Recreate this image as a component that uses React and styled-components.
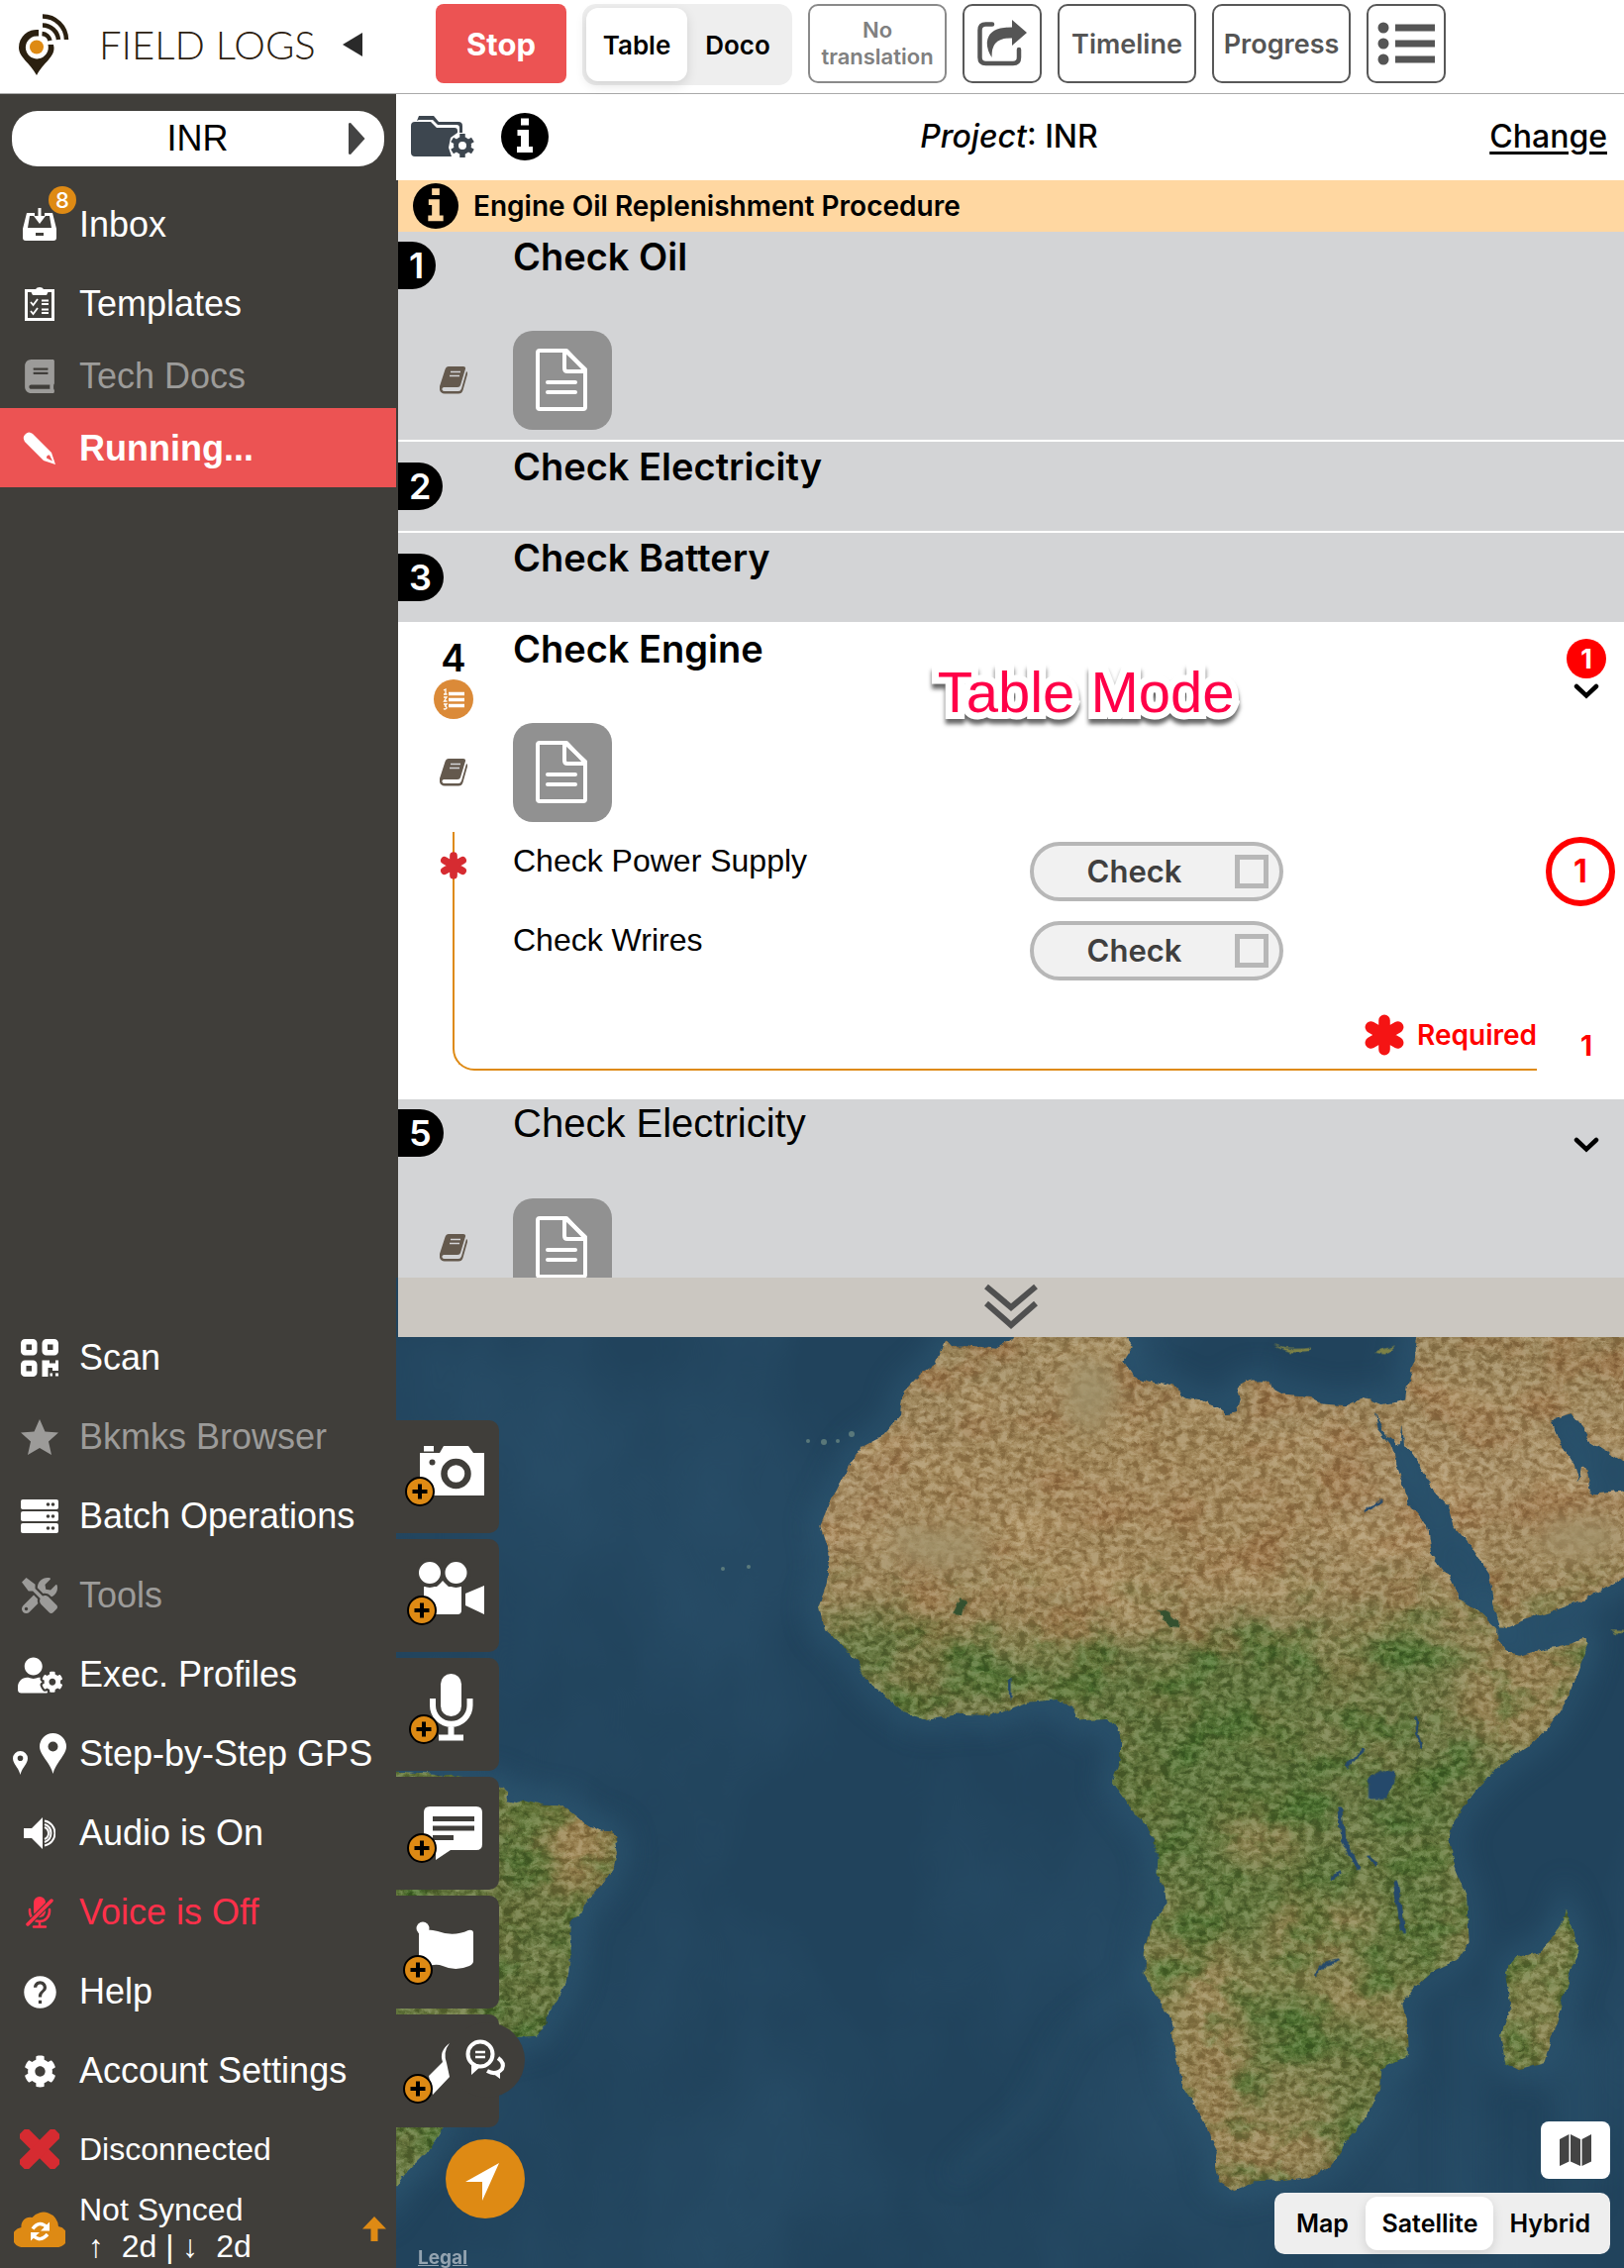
import React, { useState } from 'react'
import styled, { createGlobalStyle } from 'styled-components'
import { FaTools, FaUserCog, FaBook, FaCog } from 'react-icons/fa'
import { MdHelp } from 'react-icons/md'

const colors = {
  dark: '#403e3a',
  red: '#ec5353',
  orange: '#de8a14',
  grey: '#d3d4d6',
  alert: '#ff0000',
  ocean: '#21435c',
}

const inter = `Inter, "Noto Sans", sans-serif`
const helvetica = `"Liberation Sans", Arial, sans-serif`

const GlobalStyle = createGlobalStyle`
  * {
    box-sizing: border-box;
  }

  body {
    margin: 0;
    background: #fff;
    color: #000;
    font-family: ${inter};
  }

  button, input {
    font: inherit;
    color: inherit;
    margin: 0;
    padding: 0;
    border: 0;
    background: none;
    cursor: pointer;
  }

  h2, p, ol, ul {
    margin: 0;
    padding: 0;
    font-weight: inherit;
    list-style: none;
  }

  svg {
    display: block;
    flex: none;
  }
`

const Page = styled.div`
  display: flex;
  flex-direction: column;
  height: 100vh;
  min-height: 1900px;
`

/* ---------- header ---------- */

const Header = styled.header`
  flex: none;
  display: flex;
  height: 95px;
  border-bottom: 1px solid #a9a9a9;
`

const Brand = styled.div`
  width: 400px;
  display: flex;
  align-items: center;
  padding: 0 0 4px 16px;

  button {
    margin-left: 18px;
  }
`

const BrandName = styled.span`
  width: 228px;
  margin-left: 30px;
  font-family: Lato, sans-serif;
  font-weight: 300;
  font-size: 40px;
  line-height: 48px;
  color: #2b2010;
  white-space: nowrap;
`

const Actions = styled.div`
  display: flex;
  align-items: flex-start;
  gap: 16px;
  padding: 4px 40px;
`

const StopButton = styled.button`
  width: 132px;
  height: 80px;
  border-radius: 8px;
  background: ${colors.red};
  color: #fff;
  font-weight: 700;
  font-size: 31px;
`

const OutlineButton = styled.button`
  width: ${({ $square }) => ($square ? '80px' : '140px')};
  height: 80px;
  display: flex;
  align-items: center;
  justify-content: center;
  border: 2px solid ${({ $muted }) => ($muted ? '#8a8a8a' : '#585858')};
  border-radius: 10px;
  color: ${({ $muted }) => ($muted ? '#808080' : '#555')};
  font-weight: 600;
  font-size: ${({ $muted }) => ($muted ? '22px' : '27px')};
  line-height: 27px;
`

const Segments = styled.div`
  display: flex;
  padding: 4px;
  border-radius: ${({ $small }) => ($small ? '10px' : '14px')};
  background: #eee;
`

const Segment = styled.button`
  min-width: ${({ $tall }) => ($tall ? '102px' : '88px')};
  height: ${({ $tall }) => ($tall ? '74px' : '54px')};
  padding: ${({ $tall }) => ($tall ? '0 12px' : '0 16px')};
  border-radius: 12px;
  font-weight: 600;
  font-size: ${({ $tall }) => ($tall ? '26px' : '25px')};
  background: ${({ $active }) => ($active ? '#fff' : 'transparent')};
  box-shadow: ${({ $active }) => ($active ? '0 4px 12px rgba(0, 0, 0, 0.12)' : 'none')};
`

/* ---------- sidebar ---------- */

const Body = styled.div`
  flex: 1;
  min-height: 0;
  display: flex;
`

const Sidebar = styled.nav`
  flex: none;
  width: 400px;
  display: flex;
  flex-direction: column;
  justify-content: space-between;
  background: ${colors.dark};
  color: #fff;
  font-family: ${helvetica};
  font-size: 36px;
`

const ProjectPill = styled.button`
  width: 376px;
  height: 56px;
  display: flex;
  align-items: center;
  margin: 17px 12px 18px;
  padding-right: 19px;
  border-radius: 26px;
  background: #fff;
  color: #000;

  span {
    flex: 1;
    padding-left: 36px;
  }
`

const NavItem = styled.button`
  width: 100%;
  height: ${({ $short }) => ($short ? '66px' : '80px')};
  display: flex;
  align-items: center;
  padding-top: 2px;
  text-align: left;
  white-space: nowrap;
  background: ${({ $active }) => ($active ? colors.red : 'transparent')};
  color: ${({ $disabled, $off }) => ($disabled ? '#9c9b99' : $off ? '#ff304a' : '#fff')};
  font-weight: ${({ $active }) => ($active ? 700 : 400)};
`

const NavIcon = styled.span`
  position: relative;
  flex: none;
  width: 80px;
  display: flex;
  justify-content: center;
`

const InboxCount = styled.span`
  position: absolute;
  left: 49px;
  top: -22px;
  width: 28px;
  height: 28px;
  border-radius: 50%;
  background: ${colors.orange};
  font-family: ${inter};
  font-weight: 500;
  font-size: 22px;
  line-height: 28px;
  text-align: center;
`

const StatusRow = styled.div`
  height: 80px;
  display: flex;
  align-items: center;
  padding-right: 10px;
  font-size: 32px;
  line-height: 37px;

  p {
    flex: 1;
    white-space: pre;
  }
`

/* ---------- procedure ---------- */

const Main = styled.main`
  flex: 1;
  min-width: 0;
  display: flex;
  flex-direction: column;
`

const ProjectBar = styled.div`
  flex: none;
  height: 87px;
  display: grid;
  grid-template-columns: 1fr auto 1fr;
  align-items: center;
  padding: 0 17px 2px 15px;
  font-weight: 500;
  font-size: 32px;

  a {
    justify-self: end;
    color: #000;
    text-underline-offset: 4px;
  }
`

const BarIcons = styled.div`
  display: flex;
  align-items: center;
  gap: 27px;
`

const Banner = styled.div`
  flex: none;
  height: 52px;
  display: flex;
  align-items: center;
  gap: 15px;
  padding-left: 15px;
  border-left: 2px solid ${colors.dark};
  background: #ffd7a1;
  font-weight: 600;
  font-size: 28px;
`

const StepList = styled.ol`
  flex: 1056 1 0;
  min-height: 0;
  overflow: hidden;
  border-left: 2px solid ${colors.dark};
`

const Step = styled.li`
  position: relative;
  border-bottom: 2px solid #fff;
  background: ${({ $open }) => ($open ? '#fff' : colors.grey)};
`

const StepHead = styled.div`
  display: grid;
  grid-template-columns: 116px 1fr 88px;
  height: ${({ $plain }) => ($plain ? '90px' : '100px')};
`

const StepTitle = styled.h2`
  font-family: ${({ $light }) => ($light ? helvetica : inter)};
  font-weight: ${({ $light }) => ($light ? 400 : 600)};
  font-size: ${({ $light }) => ($light ? '40px' : '38px')};
  line-height: ${({ $light }) => ($light ? '48px' : '50px')};
`

const StepMark = styled.div`
  display: flex;
  flex-direction: column;
  align-items: ${({ $open }) => ($open ? 'center' : 'flex-start')};
  gap: 2px;
  padding: ${({ $plain, $open }) => ($open ? '14px 4px 0 0' : $plain ? '21px 0 0' : '10px 0 0')};
`

const StepBadge = styled.span`
  height: 48px;
  padding: 0 12px 0 11px;
  border-radius: 0 24px 24px 0;
  background: #000;
  color: #fff;
  font-weight: 600;
  font-size: 36px;
  line-height: 48px;
`

const StepNumber = styled.span`
  font-weight: 600;
  font-size: 38px;
  line-height: 40px;
`

const StepSide = styled.div`
  display: flex;
  flex-direction: column;
  align-items: center;
  gap: 5px;
  padding: ${({ $low }) => ($low ? '38px 0 0 12px' : '15px 0 0 12px')};
`

const AlertDot = styled.span`
  width: 40px;
  height: 40px;
  border-radius: 50%;
  background: ${colors.alert};
  color: #fff;
  font-weight: 700;
  font-size: 27px;
  line-height: 42px;
  text-align: center;
`

const Attachment = styled.div`
  display: grid;
  grid-template-columns: 116px 1fr;
  align-items: center;
  padding-bottom: 10px;
`

const Centered = styled.div`
  display: flex;
  justify-content: center;
  padding-right: 5px;
`

const DocButton = styled.button`
  width: 100px;
  height: 100px;
  border-radius: 20px;
  background: #919191;
`

const SubSteps = styled.ul`
  position: relative;
  padding-bottom: 26px;
  font-family: ${helvetica};
  font-size: 32px;

  &::before {
    content: '';
    position: absolute;
    left: 55px;
    right: 88px;
    top: 0;
    bottom: 27px;
    border: 2px solid ${colors.orange};
    border-width: 0 0 2px 2px;
    border-bottom-left-radius: 22px;
  }
`

const SubStep = styled.li`
  position: relative;
  display: grid;
  grid-template-columns: 116px 1fr 1fr 88px;
  height: 80px;
  align-items: center;
`

const SubStepMark = styled(Centered)`
  align-self: start;
  padding-top: 20px;
`

const SubStepLabel = styled.span`
  align-self: start;
  padding-top: 11px;
  line-height: 36px;
`

const CheckPill = styled.label`
  justify-self: start;
  width: 256px;
  height: 60px;
  margin-left: 5px;
  display: flex;
  align-items: center;
  border: 4px solid #b7b7b7;
  border-radius: 30px;
  background: #f1f1f1;
  color: #3f3f3f;
  font-family: ${inter};
  font-weight: 600;
  font-size: 31px;
  line-height: 48px;
  cursor: pointer;

  span {
    flex: 1;
    text-align: center;
  }

  input {
    appearance: none;
    width: 34px;
    height: 34px;
    margin-right: 11px;
    border: 5px solid #b7b7b7;
  }

  input:checked {
    background: ${colors.orange};
  }
`

const AlertRing = styled.span`
  justify-self: center;
  width: 70px;
  height: 70px;
  border: 6px solid ${colors.alert};
  border-radius: 50%;
  color: ${colors.alert};
  font-family: ${inter};
  font-weight: 700;
  font-size: 32px;
  line-height: 58px;
  text-align: center;
`

const RequiredRow = styled.div`
  display: grid;
  grid-template-columns: 1fr 88px;
  align-items: center;
  height: 82px;
  padding-top: 8px;
  color: ${colors.alert};
  font-family: ${inter};
  font-weight: 600;
  font-size: 28px;

  p {
    display: flex;
    align-items: center;
    justify-content: flex-end;
    gap: 12px;
  }

  strong {
    padding: 22px 0 0 12px;
    text-align: center;
    font-weight: 700;
  }
`

const ModeNote = styled.span`
  position: absolute;
  left: 44%;
  top: 36px;
  color: #ff0048;
  font-family: ${helvetica};
  font-size: 58px;
  line-height: 66px;
  white-space: nowrap;
  -webkit-text-stroke: 14px #fff;
  paint-order: stroke fill;
  filter: drop-shadow(0 5px 2px rgba(0, 0, 0, 0.6));
`

const CollapseBar = styled.button`
  flex: none;
  height: 60px;
  display: flex;
  align-items: center;
  justify-content: center;
  border-left: 2px solid ${colors.ocean};
  background: #cbc7c1;
`

/* ---------- map ---------- */

const MapArea = styled.section`
  position: relative;
  flex: 940 1 0;
  min-height: 0;
  overflow: hidden;
  background: ${colors.ocean};
`

const MapPicture = styled.svg`
  width: 100%;
  height: 100%;

  filter {
    color-interpolation-filters: sRGB;
  }

  .shade {
    mix-blend-mode: soft-light;
  }
`

const CaptureBar = styled.div`
  position: absolute;
  left: 0;
  bottom: 142px;
  display: flex;
  flex-direction: column;
  gap: 6px;
`

const CaptureButton = styled.button`
  position: relative;
  width: 104px;
  height: 114px;
  border-radius: 0 10px 10px 0;
  background: ${colors.dark};

  svg {
    overflow: visible;
  }
`

const LocateButton = styled.button`
  position: absolute;
  left: 50px;
  bottom: 50px;
  width: 80px;
  height: 80px;
  border-radius: 50%;
  background: ${colors.orange};
`

const LegalLink = styled.a`
  position: absolute;
  left: 22px;
  bottom: 0;
  color: #93a3b0;
  font-weight: 700;
  font-size: 19px;
  line-height: 20px;
`

const MapControls = styled.div`
  position: absolute;
  right: 14px;
  bottom: 14px;
  display: flex;
  flex-direction: column;
  align-items: flex-end;
  gap: 14px;
`

const MapButton = styled.button`
  width: 70px;
  height: 58px;
  border-radius: 8px;
  background: #fff;
`

/* ---------- icons ---------- */

const Logo = () => (
  <svg width="54" height="64" viewBox="16 12 54 64">
    <path fill="#2b2010" d="M39 29A18 18 0 0 0 19 47C19 57 30 62 37 75C44 62 55 57 54.500 47L54 44H48.500A11.500 11.500 0 1 1 39 35.500Z" />
    <circle cx="37" cy="46.500" r="7" fill={colors.orange} />
    <g fill="none" stroke="#2b2010" strokeWidth="4.500">
      <path d="M43 15.500A24 24 0 0 1 67 39" />
      <path d="M43 24.500A16 16 0 0 1 59 39" />
      <path d="M42.500 33A9 9 0 0 1 50.500 40" />
    </g>
  </svg>
)

const ShareIcon = () => (
  <svg width="52" height="50" viewBox="0 0 52 50" fill="#555">
    <path fill="none" stroke="#555" strokeWidth="4.500" strokeLinecap="round" d="M16 5.500H9.500Q3.500 5.500 3.500 11.500V39Q3.500 45 9.500 45H37Q43 45 43 39V31" />
    <path d="M36 1L51 14L36 27V19.500Q24 19 19 25Q15.500 29 15.500 39Q9 29 11.500 20Q15 8.500 36 8.500Z" />
  </svg>
)

const BulletsIcon = () => (
  <svg width="58" height="44" viewBox="0 0 58 44" fill="#555">
    {[6, 22, 38].map((y) => (
      <g key={y}>
        <circle cx="6" cy={y} r="5.500" />
        <rect x="18" y={y - 3.5} width="40" height="7" />
      </g>
    ))}
  </svg>
)

const Triangle = ({ left }) =>
  left ? (
    <svg width="20" height="24" viewBox="0 0 20 24"><path d="M20 0V24L0 12Z" fill="#2a2a2a" /></svg>
  ) : (
    <svg width="18" height="32" viewBox="0 0 18 32"><path d="M1 1Q1 0 3 0L17.500 16L3 32Q1 32 1 31Z" fill="#444" /></svg>
  )

const InboxIcon = () => (
  <svg width="36" height="34" viewBox="0 0 36 34">
    <path fill="#fff" fillRule="evenodd" d="M5 5H13V8H8L6 20H30L28 8H23V5H31L35 21V30Q35 33 32 33H4Q1 33 1 30V21ZM14 25V28H22V25Z" />
    <path fill="#fff" d="M16.500 0H19.500V8H24L18 16L12 8H16.500Z" />
  </svg>
)

const ClipboardIcon = () => (
  <svg width="30" height="34" viewBox="0 0 30 34" fill="none">
    <rect x="1.500" y="3.500" width="27" height="29" stroke="#fff" strokeWidth="3" />
    <path d="M6 4Q6 2 9 2H11Q12 0 15 0T19 2H21Q24 2 24 4L22 8H8Z" fill="#fff" />
    <path d="M6 15L8.500 18L13 12M6 24L8.500 27L13 21" stroke="#fff" strokeWidth="1.800" />
    <path d="M17 13.500H24M17 17H24M17 22.500H24M17 26H24" stroke="#fff" strokeWidth="1.800" />
  </svg>
)

const PencilIcon = () => (
  <svg width="34" height="34" viewBox="0 0 34 34">
    <path fill="#fff" fillRule="evenodd" d="M2 10Q-1 5 3 2Q6 -1 10 2L29 21L33 33L21 29ZM24 26.500L30 29.500L27 23.500Q24 23 24 26.500Z" />
  </svg>
)

const ScanIcon = () => (
  <svg width="38" height="38" viewBox="0 0 38 38">
    <g fill="none" stroke="#fff" strokeWidth="5.500">
      <rect x="2.750" y="2.750" width="11" height="11" rx="1.500" />
      <rect x="24.250" y="2.750" width="11" height="11" rx="1.500" />
      <rect x="2.750" y="24.250" width="11" height="11" rx="1.500" />
    </g>
    <path fill="#fff" d="M21.500 21.500H29V24.500H35V21.500H38V32H32V29H27.500V38H21.500ZM29.500 34.500H32V37.500H29.500ZM35 34.500H38V37.500H35Z" />
  </svg>
)

const StarIcon = () => (
  <svg width="38" height="36" viewBox="0 0 38 36">
    <path fill="currentColor" d="M19 0L24.500 12.500L38 13.500L28 22.500L31 36L19 29L7 36L10 22.500L0 13.500L13.500 12.500Z" />
  </svg>
)

const ServerIcon = () => (
  <svg width="38" height="34" viewBox="0 0 38 34">
    {[0, 12, 24].map((y) => (
      <g key={y}>
        <rect y={y} width="38" height="10" rx="2" fill="#fff" />
        <circle cx="27.500" cy={y + 5} r="1.800" fill={colors.dark} />
        <circle cx="32.500" cy={y + 5} r="1.800" fill={colors.dark} />
      </g>
    ))}
  </svg>
)

const PinsIcon = () => (
  <svg width="54" height="42" viewBox="0 0 54 42" fill="#fff" fillRule="evenodd">
    <path d="M40.500 0A13.500 13.500 0 0 1 54 13.500C54 22 43 30 40.500 41C38 30 27 22 27 13.500A13.500 13.500 0 0 1 40.500 0ZM40.500 8.500A5 5 0 1 0 40.500 18.500A5 5 0 1 0 40.500 8.500Z" />
    <path d="M7.500 18A7.500 7.500 0 0 1 15 25.500C15 31 9 35 7.500 42C6 35 0 31 0 25.500A7.500 7.500 0 0 1 7.500 18ZM7.500 22.500A2.800 2.800 0 1 0 7.500 28.100A2.800 2.800 0 1 0 7.500 22.500Z" />
  </svg>
)

const SpeakerIcon = () => (
  <svg width="32" height="32" viewBox="0 0 32 32">
    <path fill="#fff" d="M0 11H8L19 0V32L8 21H0Z" />
    <path fill="none" stroke="#fff" strokeWidth="2" d="M21 10A6.500 6.500 0 0 1 21 22M21 7A9.500 9.500 0 0 1 21 25M21 3.500A12.700 12.700 0 0 1 21 28.500" />
  </svg>
)

const MicOffIcon = () => (
  <svg width="28" height="32" viewBox="0 0 28 32" fill="none" stroke="#ff304a" strokeLinecap="round">
    <rect x="8" y="0" width="12" height="21" rx="6" fill="#ff304a" stroke="none" />
    <path strokeWidth="2.500" d="M4 13V15A10 10 0 0 0 24 15V13M14 26V30M8 30.500H20" />
    <path stroke={colors.dark} strokeWidth="5.500" d="M2 28L26 4" />
    <path strokeWidth="3.500" d="M2 28L26 4" />
  </svg>
)

const CrossIcon = () => (
  <svg width="40" height="40" viewBox="0 0 40 40">
    <g transform="rotate(45 20 20)" fill="#d62b31">
      <rect x="-5" y="13.500" width="50" height="13" rx="3" />
      <rect x="13.500" y="-5" width="13" height="50" rx="3" />
    </g>
  </svg>
)

const CloudIcon = () => (
  <svg width="52" height="38" viewBox="0 0 52 38">
    <path fill={colors.orange} d="M10 38A10 10 0 0 1 7.500 18A9 9 0 0 1 18.500 8A15 15 0 0 1 45 17A10.500 10.500 0 0 1 42 38Z" />
    <g fill="none" stroke="#fff" strokeWidth="3.500">
      <path d="M19 19.500Q26 10 34 18.500M34 25Q26 34 19 25.500" />
    </g>
    <path fill="#fff" d="M36 12.500V21.500H27ZM17 31.500V23H26Z" />
  </svg>
)

const UpArrow = () => (
  <svg width="24" height="25" viewBox="0 0 24 25">
    <path fill={colors.orange} d="M12 0L24 12.500H15.500V25H8.500V12.500H0Z" />
  </svg>
)

const FolderIcon = () => (
  <svg width="64" height="42" viewBox="0 0 64 42">
    <path fill="#3d464f" d="M6 5L8 0H23L28 6H48Q52 6 52 10V17H49V12Q49 9 46 9H27L22 4H8Z" />
    <path fill="#3d464f" d="M0 10Q0 6 4 6H20L26 12H44Q47 12 47 15V17L40 22L38 32L41 41H4Q0 41 0 37Z" />
    <g transform="translate(52 30)" stroke="#3d464f">
      <circle r="6.500" fill="none" strokeWidth="5" />
      <path strokeWidth="5.500" d="M0 -12V-8M0 8V12M-10.400 -6L-7 -4M10.400 6L7 4M-10.400 6L-7 4M10.400 -6L7 -4" />
    </g>
  </svg>
)

const InfoIcon = ({ size, hole }) => (
  <svg width={size} height={size} viewBox="0 0 48 48">
    <circle cx="24" cy="24" r="24" />
    <path fill={hole} d="M20 5.500H28V12.500H20ZM16.500 17H28V34H32V40H16V34H20V23H16.500Z" />
  </svg>
)

const BookIcon = () => (
  <svg width="28" height="28" viewBox="0 0 28 28">
    <path fill="#64594d" d="M9 0H24Q26.500 0 26 2.500L21 19Q20.500 21 18 21H4Q2 21.500 2.500 23.500Q3 25 5 25H19Q21 25 22 22.500L27 5Q28.500 6 28 8L23.500 24Q22.500 27.500 19 27.500H5Q-1 27 0 20L5.500 3Q6.500 0 9 0Z" />
    <path stroke={colors.grey} strokeWidth="1.500" d="M11 5.500H21M10 9.500H20" />
  </svg>
)

const DocIcon = () => (
  <svg width="100" height="100" viewBox="0 0 100 100" fill="none" stroke="#fff" strokeWidth="4" strokeLinejoin="round" strokeLinecap="round">
    <path d="M27 20H54L73 40V77Q73 79 71 79H27Q25 79 25 77V22Q25 20 27 20Z" />
    <path d="M52 21V38Q52 41 55 41H73M55 22L73 39" />
    <path d="M35 52H63M35 62H63" />
  </svg>
)

const ChevronIcon = () => (
  <svg width="26" height="16" viewBox="0 0 26 16">
    <path d="M3 3L13 12.500L23 3" fill="none" stroke="#000" strokeWidth="4.500" strokeLinecap="round" />
  </svg>
)

const DoubleChevron = () => (
  <svg width="56" height="50" viewBox="0 0 56 50" fill="none" stroke="#505050" strokeWidth="6">
    <path d="M3 4L28 25L53 4M3 21L28 43L53 21" />
  </svg>
)

const OrderedIcon = () => (
  <svg width="40" height="40" viewBox="0 0 40 40">
    <circle cx="20" cy="20" r="20" fill="#db8a38" />
    <path stroke="#fff" strokeWidth="3.500" d="M15 14.500H31M15 20.500H31M15 26.500H31" />
    <path fill="none" stroke="#fff" strokeWidth="1.300" d="M10 11L12 10V15M10 15H13.500M10 18H13L10.500 22H13.500M10 25H13L11.500 27Q14 28 12.500 29.500Q11 30.500 10 29.500" />
  </svg>
)

const Asterisk = ({ size, color }) => (
  <svg width={size} height={size} viewBox="-20 -20 40 40" stroke={color} strokeWidth="11" strokeLinecap="round">
    <path d="M0 -14V14M-13 -7.500L13 7.500M-13 7.500L13 -7.500" />
  </svg>
)

const Plus = ({ x, y }) => (
  <g transform={`translate(${x} ${y})`} stroke="#000">
    <circle r="14" fill={colors.orange} strokeWidth="2" />
    <path strokeWidth="4" d="M-7.500 0H7.500M0 -7.500V7.500" />
  </g>
)

const captureTools = [
  {
    label: 'Add photo',
    plus: [24, 72],
    art: (
      <>
        <path d="M24 33H44L48 26H73L78 33H89V76H24ZM28 26H38V31.500H28Z" />
        <circle cx="36.500" cy="42.500" r="3" fill={colors.dark} />
        <circle cx="60.500" cy="54" r="12" stroke={colors.dark} strokeWidth="6.500" />
      </>
    ),
  },
  {
    label: 'Add video',
    plus: [26, 72],
    art: (
      <>
        <path d="M28 48H41L47 42L53 48H66V72Q66 76 62 76H28ZM70 55L89 47V76L70 67Z" />
        <g stroke={colors.dark} strokeWidth="4">
          <circle cx="34" cy="34" r="13" />
          <circle cx="60.500" cy="34" r="13" />
        </g>
      </>
    ),
  },
  {
    label: 'Add audio',
    plus: [28, 72],
    art: (
      <>
        <rect x="45" y="16" width="21" height="43" rx="10.500" />
        <path fill="none" stroke="#fff" strokeWidth="6" d="M37 41V48A18.500 18.500 0 0 0 74.500 48V41M55.500 67V80M43 80.500H68" />
      </>
    ),
  },
  {
    label: 'Add comment',
    plus: [26, 72],
    art: (
      <>
        <path d="M34 30H81Q87 30 87 36V68Q87 74 81 74H55L40 84V74H34Q28 74 28 68V36Q28 30 34 30Z" />
        <path stroke={colors.dark} strokeWidth="5" d="M37 42.500H79M37 52H79M37 61.500H58" />
      </>
    ),
  },
  {
    label: 'Add flag',
    plus: [22, 75],
    art: (
      <>
        <circle cx="27" cy="33" r="6.500" />
        <path d="M23 36Q32 33 42 36Q58 42 73 35Q78 34 78 38V66Q78 69 74 71Q60 77 47 71Q40 68 30 72L23 74Z" />
      </>
    ),
  },
  {
    label: 'Add drawing',
    plus: [22, 75],
    art: (
      <>
        <circle cx="92" cy="46" r="38" fill={colors.dark} />
        <path d="M54 29Q43 37 47 48L33 62L37 81L54 63L51 49Q47 38 54 29Z" />
        <g fill="none" stroke="#fff" strokeWidth="4">
          <circle cx="85" cy="40" r="12.500" />
          <path d="M103 44Q110 49 107 55Q101 62 92 57" />
          <path strokeWidth="2.500" d="M80 38H90M80 43H90" />
        </g>
        <path d="M76 48V61L86 52ZM105 56V65L97 59Z" />
      </>
    ),
  },
]

/* Land outlines; the Africa sheet and the Brazil sheet each have their own scale. */
const AFRICA =
  'M318 22L330 35L370 33L410 38L440 20L470 5V-140H640V0L665 35L648 60L665 85L690 95L745 105L760 125L790 130L820 142L835 152L855 148L862 125L856 108L880 95L905 95L920 105L945 118L990 122L1015 135L1055 138L1085 125L1105 130L1120 136L1150 132L1165 128L1168 105L1182 65L1187 17V-140H1620V245L1568 235L1530 215L1505 200L1495 180L1475 155L1455 160L1435 165L1450 200L1475 240L1485 270L1490 246L1500 250L1507 268L1502 285L1515 295L1568 290L1620 290V430L1568 442L1520 465L1495 480L1450 495L1385 515L1355 528L1340 527L1330 500L1325 470L1320 435L1290 390L1255 350L1245 315L1215 285L1185 235L1163 205L1160 170L1157 200L1150 208L1130 192L1118 170L1110 150L1115 180L1140 210L1152 250L1175 315L1205 350L1213 400L1245 440L1265 480L1300 500L1335 530V552L1350 572L1375 578L1430 565L1470 557L1498 545L1500 565L1480 615L1460 660L1430 705L1395 735L1340 770L1300 810L1275 840L1255 870L1246 905L1255 950L1278 1000L1283 1080L1260 1115L1215 1135L1180 1165L1160 1190L1170 1235L1172 1280L1120 1305L1118 1340L1100 1380L1060 1430L1025 1475L990 1495L940 1500L890 1502L850 1518L820 1500L815 1475L822 1452L790 1390L755 1335L740 1270L738 1230L715 1190L685 1140V1100L700 1045L725 1015L722 985L710 965L712 930L690 880L655 840L625 800L640 760V715L620 690L565 692L550 665L525 655L470 660L400 685L340 682L280 692L240 675L180 630L160 595L130 560L95 530L85 490L100 450L105 400L88 350L110 300L140 245L165 210L205 190L235 155L240 115L270 85L300 65Z'
const MADAGASCAR =
  'M1460 1025L1475 1060L1485 1100L1470 1130L1445 1220L1420 1295L1375 1307L1350 1295L1340 1245L1360 1190L1350 1130L1370 1108L1410 1100L1440 1070L1455 1045Z'
const BRAZIL =
  'M0 25L130 32L230 50L335 75L355 90L350 115L380 120L410 112L460 128L520 130L590 185L630 205L665 208L680 225L687 270L680 310L640 370L600 410L570 465L545 480V580L535 650L515 700L470 770V795L435 830L380 835L250 880L170 1000L160 1105L110 1180L50 1240L0 1310Z'
const AFRICA_SHEET = 'translate(380 -10) scale(0.5485 0.574)'
const BRAZIL_SHEET = 'translate(-5 430) scale(0.3333)'

const greens = [
  [220, 560, 130, 60], [480, 600, 200, 50], [820, 640, 240, 90], [1140, 580, 110, 80],
  [820, 800, 210, 110], [1180, 900, 80, 150], [900, 980, 180, 100], [1170, 1100, 90, 60],
  [980, 1230, 120, 70], [1080, 1360, 50, 90], [720, 760, 80, 90],
]
const sands = [
  [1380, 640, 110, 110], [800, 1260, 70, 170], [640, 300, 400, 150], [900, 1440, 110, 50],
  [1000, 1060, 100, 50], [1060, 1180, 80, 40], [900, 900, 80, 40], [560, 520, 260, 30],
]

const Satellite = () => (
  <MapPicture viewBox="0 0 1240 940" preserveAspectRatio="xMidYMid slice" role="img" aria-label="Satellite map">
    <defs>
      <linearGradient id="land" gradientUnits="userSpaceOnUse" x1="0" y1="0" x2="0" y2="1520">
        <stop offset="0" stopColor="#9a855a" />
        <stop offset="0.200" stopColor="#a68c62" />
        <stop offset="0.300" stopColor="#9c865a" />
        <stop offset="0.390" stopColor="#7c7d4c" />
        <stop offset="0.560" stopColor="#6a7843" />
        <stop offset="0.750" stopColor="#7c804a" />
        <stop offset="1" stopColor="#8a7f50" />
      </linearGradient>
      <filter id="soft" x="-30%" y="-30%" width="160%" height="160%">
        <feGaussianBlur stdDeviation="22" />
      </filter>
      <filter id="shelf" x="-10%" y="-10%" width="120%" height="120%">
        <feGaussianBlur stdDeviation="14" />
      </filter>
      <filter id="coast" x="-5%" y="-5%" width="110%" height="110%">
        <feTurbulence type="fractalNoise" baseFrequency="0.08" numOctaves="3" seed="4" result="n" />
        <feDisplacementMap in="SourceGraphic" in2="n" scale="7" xChannelSelector="R" yChannelSelector="G" />
      </filter>
      <filter id="patches" x="0" y="0" width="100%" height="100%">
        <feTurbulence type="fractalNoise" baseFrequency="0.018 0.024" numOctaves="6" seed="11" />
        <feColorMatrix type="matrix" values="0 0 0 0 0.230  0 0 0 0 0.420  0 0 0 0 0.150  3.500 0 0 0 -1.650" />
      </filter>
      <filter id="dunes" x="0" y="0" width="100%" height="100%">
        <feTurbulence type="fractalNoise" baseFrequency="0.010 0.022" numOctaves="6" seed="21" />
        <feColorMatrix type="matrix" values="0 0 0 0 0.720  0 0 0 0 0.610  0 0 0 0 0.430  0 3.500 0 0 -1.650" />
      </filter>
      <filter id="rust" x="0" y="0" width="100%" height="100%">
        <feTurbulence type="fractalNoise" baseFrequency="0.014 0.020" numOctaves="6" seed="34" />
        <feColorMatrix type="matrix" values="0 0 0 0 0.600  0 0 0 0 0.430  0 0 0 0 0.260  0 3.500 0 0 -1.750" />
      </filter>
      <filter id="grain" x="0" y="0" width="100%" height="100%">
        <feTurbulence type="fractalNoise" baseFrequency="0.110 0.160" numOctaves="5" seed="3" />
        <feColorMatrix type="matrix" values="2.400 0 0 0 -0.700  2.400 0 0 0 -0.700  2.400 0 0 0 -0.700  0 0 0 0 1" />
      </filter>
      <filter id="swell" x="0" y="0" width="100%" height="100%">
        <feTurbulence type="fractalNoise" baseFrequency="0.005 0.003" numOctaves="4" seed="8" />
        <feColorMatrix type="matrix" values="0 0 0 0 0.190  0 0 0 0 0.350  0 0 0 0 0.460  2 0 0 0 -0.750" />
      </filter>
      <linearGradient id="greenZone" x1="0" y1="0" x2="0" y2="1">
        <stop offset="0.230" stopColor="#000" />
        <stop offset="0.340" stopColor="#fff" />
      </linearGradient>
      <linearGradient id="duneZone" x1="0" y1="0" x2="0" y2="1">
        <stop offset="0.250" stopColor="#fff" />
        <stop offset="0.420" stopColor="#444" />
      </linearGradient>
      <mask id="greenMask"><rect width="1240" height="940" fill="url(#greenZone)" /></mask>
      <mask id="duneMask"><rect width="1240" height="940" fill="url(#duneZone)" /></mask>
      <clipPath id="landClip">
        <path d={AFRICA} transform={AFRICA_SHEET} />
        <path d={MADAGASCAR} transform={AFRICA_SHEET} />
        <path d={BRAZIL} transform={BRAZIL_SHEET} />
      </clipPath>
    </defs>

    <rect width="1240" height="940" fill={colors.ocean} />
    <rect width="1240" height="940" filter="url(#swell)" opacity="0.450" />
    <g filter="url(#shelf)" fill="none" stroke="#325f7a" strokeWidth="36" opacity="0.600">
      <path d={AFRICA} transform={AFRICA_SHEET} />
      <path d={MADAGASCAR} transform={AFRICA_SHEET} />
      <path d={BRAZIL} transform={BRAZIL_SHEET} strokeWidth="70" />
      <path d="M560 850L640 780L680 700L750 650" strokeWidth="14" opacity="0.500" />
      <path d="M1080 660V900M1190 700V880" strokeWidth="40" opacity="0.400" />
    </g>

    <g filter="url(#coast)">
      <g clipPath="url(#landClip)">
        <g transform={AFRICA_SHEET}>
          <rect x="0" y="-140" width="1640" height="1700" fill="url(#land)" />
          <g filter="url(#soft)">
            <g fill="#4a6e30" opacity="0.500">
              {greens.map(([x, y, rx, ry]) => <ellipse key={`${x}-${y}`} cx={x} cy={y} rx={rx} ry={ry} />)}
            </g>
            <g fill="#a28759" opacity="0.650">
              {sands.map(([x, y, rx, ry]) => <ellipse key={`${x}-${y}`} cx={x} cy={y} rx={rx} ry={ry} />)}
            </g>
          </g>
        </g>
        <path d={BRAZIL} transform={BRAZIL_SHEET} fill="#62743c" />
        <g filter="url(#soft)" fill="#9a8151">
          <ellipse cx="185" cy="510" rx="45" ry="60" />
        </g>
        <g mask="url(#greenMask)">
          <rect width="1240" height="940" filter="url(#patches)" opacity="0.550" />
        </g>
        <g mask="url(#duneMask)">
          <rect width="1240" height="940" filter="url(#dunes)" opacity="0.500" />
          <rect width="1240" height="940" filter="url(#rust)" opacity="0.550" />
        </g>
        <rect className="shade" width="1240" height="940" filter="url(#grain)" opacity="0.450" />
        <g transform={AFRICA_SHEET}>
          <g filter="url(#soft)" fill="#a1936c" opacity="0.800">
            <ellipse cx="585" cy="120" rx="50" ry="65" />
            <ellipse cx="300" cy="385" rx="100" ry="35" />
            <ellipse cx="1480" cy="370" rx="80" ry="35" />
          </g>
        </g>
      </g>
      <g transform={AFRICA_SHEET} fill="#7c8146">
        <path d="M922 32Q955 42 992 36L985 44Q950 48 922 32ZM1110 44L1145 32L1130 48Z" />
        <path d="M1545 532L1568 533V538H1550Z" />
      </g>
      <g transform={AFRICA_SHEET} fill="#25496b" stroke="#25496b" strokeLinecap="round">
        <path d="M1100 790L1120 780L1145 785L1140 805L1130 828L1100 830Z" />
        <path fill="none" strokeWidth="9" d="M1045 850L1050 900L1065 925L1078 952M1147 978L1155 1020L1160 1062" />
        <path fill="none" strokeWidth="5" d="M1184 690L1186 715L1194 738M1058 775L1085 745M1002 1140L1020 1120L1040 1115M1092 325L1120 305M1095 932L1112 946M438 620V650M1030 970L1045 958" />
        <path stroke="none" fill="#35512f" d="M708 498L725 500L745 515L748 530L730 528ZM332 505L345 478L356 482L350 508Z" />
      </g>
    </g>
    <g fill="#7f9a8c" opacity="0.600">
      <circle cx="416" cy="105" r="2" />
      <circle cx="432" cy="106" r="3" />
      <circle cx="446" cy="105" r="2" />
      <circle cx="460" cy="98" r="3" />
      <circle cx="330" cy="234" r="2" />
      <circle cx="356" cy="232" r="2" />
    </g>
  </MapPicture>
)

/* ---------- content ---------- */

const tools = [
  { label: 'Scan', icon: <ScanIcon /> },
  { label: 'Bkmks Browser', icon: <StarIcon />, disabled: true },
  { label: 'Batch Operations', icon: <ServerIcon /> },
  { label: 'Tools', icon: <FaTools size={36} />, disabled: true },
  { label: 'Exec. Profiles', icon: <FaUserCog size={45} /> },
  { label: 'Step-by-Step GPS', icon: <PinsIcon /> },
  { label: 'Audio is On', icon: <SpeakerIcon /> },
  { label: 'Voice is Off', icon: <MicOffIcon />, off: true },
  { label: 'Help', icon: <MdHelp size={39} /> },
  { label: 'Account Settings', icon: <FaCog size={33} /> },
]

const StepAttachment = () => (
  <Attachment>
    <Centered><BookIcon /></Centered>
    <DocButton aria-label="Open document"><DocIcon /></DocButton>
  </Attachment>
)

const ClosedStep = ({ number, title, attachment, light, expandable }) => (
  <Step>
    <StepHead $plain={!attachment}>
      <StepMark $plain={!attachment}><StepBadge>{number}</StepBadge></StepMark>
      <StepTitle $light={light}>{title}</StepTitle>
      {expandable && <StepSide $low><ChevronIcon /></StepSide>}
    </StepHead>
    {attachment && <StepAttachment />}
  </Step>
)

const CheckRow = ({ label, required }) => {
  const [done, setDone] = useState(false)
  return (
    <SubStep>
      <SubStepMark>{required && <Asterisk size={28} color="#d62b31" />}</SubStepMark>
      <SubStepLabel>{label}</SubStepLabel>
      <CheckPill>
        <span>Check</span>
        <input type="checkbox" aria-label={label} checked={done} onChange={() => setDone(!done)} />
      </CheckPill>
      {required && <AlertRing>1</AlertRing>}
    </SubStep>
  )
}

const App = () => {
  const [view, setView] = useState('Table')
  const [layer, setLayer] = useState('Satellite')

  return (
    <Page>
      <GlobalStyle />
      <Header>
        <Brand>
          <Logo />
          <BrandName>FIELD LOGS</BrandName>
          <button aria-label="Collapse menu"><Triangle left /></button>
        </Brand>
        <Actions>
          <StopButton>Stop</StopButton>
          <Segments>
            {['Table', 'Doco'].map((name) => (
              <Segment key={name} $tall $active={view === name} onClick={() => setView(name)}>{name}</Segment>
            ))}
          </Segments>
          <OutlineButton $muted>No<br />translation</OutlineButton>
          <OutlineButton $square aria-label="Share"><ShareIcon /></OutlineButton>
          <OutlineButton>Timeline</OutlineButton>
          <OutlineButton>Progress</OutlineButton>
          <OutlineButton $square aria-label="List"><BulletsIcon /></OutlineButton>
        </Actions>
      </Header>

      <Body>
        <Sidebar>
          <div>
            <ProjectPill><span>INR</span><Triangle /></ProjectPill>
            <NavItem><NavIcon><InboxIcon /><InboxCount>8</InboxCount></NavIcon>Inbox</NavItem>
            <NavItem><NavIcon><ClipboardIcon /></NavIcon>Templates</NavItem>
            <NavItem $short $disabled><NavIcon><FaBook size={34} /></NavIcon>Tech Docs</NavItem>
            <NavItem $active><NavIcon><PencilIcon /></NavIcon>Running...</NavItem>
          </div>
          <div>
            {tools.map(({ label, icon, disabled, off }) => (
              <NavItem key={label} $disabled={disabled} $off={off}>
                <NavIcon>{icon}</NavIcon>
                {label}
              </NavItem>
            ))}
            <StatusRow><NavIcon><CrossIcon /></NavIcon><p>Disconnected</p></StatusRow>
            <StatusRow>
              <NavIcon><CloudIcon /></NavIcon>
              <p>{'Not Synced\n ↑  2d | ↓  2d'}</p>
              <UpArrow />
            </StatusRow>
          </div>
        </Sidebar>

        <Main>
          <ProjectBar>
            <BarIcons>
              <FolderIcon />
              <InfoIcon size={48} hole="#fff" />
            </BarIcons>
            <span><em>Project</em>: INR</span>
            <a href="#change">Change</a>
          </ProjectBar>
          <Banner>
            <InfoIcon size={46} hole="#ffd7a1" />
            Engine Oil Replenishment Procedure
          </Banner>

          <StepList>
            <ClosedStep number={1} title="Check Oil" attachment />
            <ClosedStep number={2} title="Check Electricity" />
            <ClosedStep number={3} title="Check Battery" />
            <Step $open>
              <StepHead>
                <StepMark $open>
                  <StepNumber>4</StepNumber>
                  <OrderedIcon />
                </StepMark>
                <StepTitle>Check Engine</StepTitle>
                <StepSide>
                  <AlertDot>1</AlertDot>
                  <ChevronIcon />
                </StepSide>
              </StepHead>
              <StepAttachment />
              <SubSteps>
                <CheckRow label="Check Power Supply" required />
                <CheckRow label="Check Wrires" />
                <li>
                  <RequiredRow>
                    <p><Asterisk size={42} color="#f51414" />Required</p>
                    <strong>1</strong>
                  </RequiredRow>
                </li>
              </SubSteps>
              <ModeNote>Table Mode</ModeNote>
            </Step>
            <ClosedStep number={5} title="Check Electricity" attachment light expandable />
          </StepList>

          <CollapseBar aria-label="Collapse procedure"><DoubleChevron /></CollapseBar>

          <MapArea>
            <Satellite />
            <CaptureBar>
              {captureTools.map(({ label, plus, art }) => (
                <CaptureButton key={label} aria-label={label}>
                  <svg width="104" height="114" viewBox="0 0 104 114" fill="#fff">
                    {art}
                    <Plus x={plus[0]} y={plus[1]} />
                  </svg>
                </CaptureButton>
              ))}
            </CaptureBar>
            <LocateButton aria-label="My location">
              <svg width="80" height="80" viewBox="0 0 80 80"><path fill="#fff" d="M54 24L37 62V43H20Z" /></svg>
            </LocateButton>
            <LegalLink href="#legal">Legal</LegalLink>
            <MapControls>
              <MapButton aria-label="Map options">
                <svg width="70" height="58" viewBox="0 0 70 58">
                  <path fill="#444" d="M19 18L28.500 13V40.500L19 45ZM30 13L40 18V45L30 40.500ZM41.500 18L51 13V40.500L41.500 45Z" />
                </svg>
              </MapButton>
              <Segments $small>
                {['Map', 'Satellite', 'Hybrid'].map((name) => (
                  <Segment key={name} $active={layer === name} onClick={() => setLayer(name)}>{name}</Segment>
                ))}
              </Segments>
            </MapControls>
          </MapArea>
        </Main>
      </Body>
    </Page>
  )
}

export default App
